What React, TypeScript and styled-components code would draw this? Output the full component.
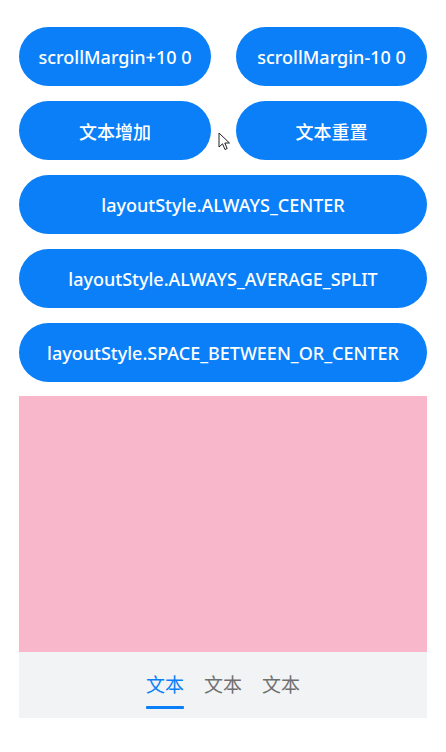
import React from "react";
import styled, { createGlobalStyle } from "styled-components";

const GlobalStyle = createGlobalStyle`
  html, body {
    margin: 0;
    padding: 0;
    background: #ffffff;
  }
  body {
    font-family: "Noto Sans", "Noto Sans CJK SC", sans-serif;
  }
`;

const Page = styled.div`
  position: relative;
  display: flex;
  flex-direction: column;
  gap: 15px;
  padding: 27px 19px 0 19px;
  width: 408px;
`;

const ButtonRow = styled.div`
  display: grid;
  grid-template-columns: 192px 191px;
  column-gap: 25px;
`;

const PillButton = styled.button`
  height: 59px;
  border: none;
  border-radius: 30px;
  background: #0a7ff8;
  color: #ffffff;
  font-family: "Noto Sans", "Noto Sans CJK SC", sans-serif;
  font-size: 18px;
  font-weight: 500;
  display: flex;
  align-items: center;
  justify-content: center;
  padding: 0;
  cursor: pointer;
`;

const Tabs = styled.div`
  display: flex;
  flex-direction: column;
  margin-top: -1px;
`;

const Content = styled.div`
  height: 256px;
  background: #f9b7cc;
`;

const TabBar = styled.div`
  height: 66px;
  background: #f1f3f5;
  display: flex;
  justify-content: center;
  gap: 20px;
`;

const Tab = styled.div<{ $active?: boolean }>`
  position: relative;
  display: flex;
  align-items: center;
  font-family: "Noto Sans CJK SC", sans-serif;
  font-size: 19px;
  color: ${(p) => (p.$active ? "#0a7ff8" : "#707070")};
  padding-bottom: 3px;

  &::after {
    content: "";
    display: ${(p) => (p.$active ? "block" : "none")};
    position: absolute;
    left: 0;
    right: 0;
    bottom: 9px;
    height: 3px;
    border-radius: 1px;
    background: #0a7ff8;
  }
`;

const Pointer = styled.svg`
  position: absolute;
  left: 218px;
  top: 132px;
  width: 14px;
  height: 20px;
`;

export default function App() {
  return (
    <>
      <GlobalStyle />
      <Page>
        <ButtonRow>
          <PillButton>scrollMargin+10 0</PillButton>
          <PillButton>scrollMargin-10 0</PillButton>
        </ButtonRow>
        <ButtonRow>
          <PillButton>文本增加</PillButton>
          <PillButton>文本重置</PillButton>
        </ButtonRow>
        <PillButton>layoutStyle.ALWAYS_CENTER</PillButton>
        <PillButton>layoutStyle.ALWAYS_AVERAGE_SPLIT</PillButton>
        <PillButton>layoutStyle.SPACE_BETWEEN_OR_CENTER</PillButton>
        <Tabs>
          <Content />
          <TabBar>
            <Tab $active>文本</Tab>
            <Tab>文本</Tab>
            <Tab>文本</Tab>
          </TabBar>
        </Tabs>
        <Pointer viewBox="0 0 14 20">
          <path
            d="M1 1 L1 15 L4.5 11.8 L7 17.5 L9.2 16.5 L6.8 11 L11.5 11 Z"
            fill="#ffffff"
            stroke="#222222"
            strokeWidth="1"
            strokeLinejoin="round"
          />
        </Pointer>
      </Page>
    </>
  );
}
